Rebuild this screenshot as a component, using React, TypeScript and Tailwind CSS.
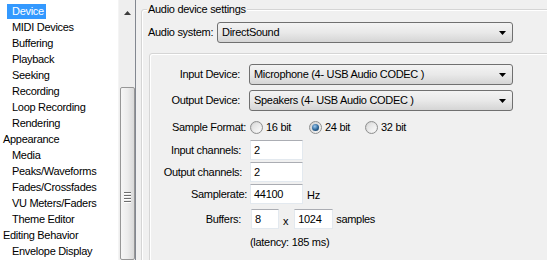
import React from 'react';

const treeItems: { label: string; child?: boolean; selected?: boolean }[] = [
  { label: 'Device', child: true, selected: true },
  { label: 'MIDI Devices', child: true },
  { label: 'Buffering', child: true },
  { label: 'Playback', child: true },
  { label: 'Seeking', child: true },
  { label: 'Recording', child: true },
  { label: 'Loop Recording', child: true },
  { label: 'Rendering', child: true },
  { label: 'Appearance' },
  { label: 'Media', child: true },
  { label: 'Peaks/Waveforms', child: true },
  { label: 'Fades/Crossfades', child: true },
  { label: 'VU Meters/Faders', child: true },
  { label: 'Theme Editor', child: true },
  { label: 'Editing Behavior' },
  { label: 'Envelope Display', child: true },
];

function Combo({ value, className }: { value: string; className: string }) {
  return (
    <div
      className={`h-[21px] flex items-center justify-between rounded-[3px] border border-[#707070] bg-linear-to-b from-[#f3f3f3] via-[#e9e9e9] to-[#d5d5d5] pl-[4px] pr-[6px] ${className}`}
    >
      <span className="whitespace-nowrap">{value}</span>
      <svg width="7" height="4" viewBox="0 0 7 4">
        <path d="M0 0h7L3.5 4z" fill="#000" />
      </svg>
    </div>
  );
}

function TextBox({ value, className }: { value: string; className: string }) {
  return (
    <div
      className={`h-[20px] flex items-center bg-white border border-[#e3e9ef] border-t-[#abadb3] pl-[3px] ${className}`}
    >
      {value}
    </div>
  );
}

function Radio({ checked, label }: { checked?: boolean; label: string }) {
  return (
    <div className="flex items-center gap-[3px]">
      <span className="w-[13px] h-[13px] rounded-full border border-[#8e8f8f] bg-linear-to-br from-[#cfcfcf] to-[#f7f7f7] flex items-center justify-center">
        {checked ? (
          <span className="w-[7px] h-[7px] rounded-full bg-[radial-gradient(circle_at_40%_35%,#9cc8ef,#2a6497_55%,#0f2a44)]" />
        ) : (
          <span className="w-[9px] h-[9px] rounded-full bg-linear-to-br from-[#dcdcdc] to-[#fbfbfb]" />
        )}
      </span>
      <span>{label}</span>
    </div>
  );
}

function Label({ text, pr }: { text: string; pr: string }) {
  return <div className={`w-[99px] shrink-0 text-right whitespace-nowrap ${pr}`}>{text}</div>;
}

export default function App() {
  return (
    <div className="w-[547px] h-[260px] overflow-hidden bg-[#f0f0f0] flex font-['Liberation_Sans',Arial,sans-serif] text-[11px] tracking-[-0.3px] text-black leading-[13px]">
      {/* tree view */}
      <div className="w-[136px] h-full shrink-0 bg-white border-r border-[#828790] flex">
        <ul className="flex-1 pt-[3px]">
          {treeItems.map((it) => (
            <li key={it.label} className="h-[16px] flex items-center">
              <span
                className={
                  (it.child ? 'ml-[7px] pl-[5px] pr-[2px]' : 'ml-[1px] pl-[2px]') +
                  (it.selected ? ' h-[15px] flex items-center bg-[#3399ff] text-white' : '') +
                  ' whitespace-nowrap'
                }
              >
                {it.label}
              </span>
            </li>
          ))}
        </ul>
        {/* scrollbar */}
        <div className="w-[17px] h-full bg-[#eeeeee] border-l border-[#f4f4f4] flex flex-col items-center">
          <div className="h-[17px] w-full flex items-center justify-center mt-[4px]">
            <svg width="7" height="4" viewBox="0 0 7 4">
              <path d="M3.5 0L7 4H0z" fill="#3c3c3c" />
            </svg>
          </div>
          <div className="mt-[66px] w-[15px] flex-1 rounded-[2px] border border-[#979797] bg-linear-to-r from-[#f6f6f6] via-[#ececec] to-[#d9d9d9] flex flex-col items-center">
            <div className="mt-[104px] flex flex-col gap-[1px]">
              <span className="w-[7px] h-[2px] border-t border-[#6e6e6e] bg-white" />
              <span className="w-[7px] h-[2px] border-t border-[#6e6e6e] bg-white" />
              <span className="w-[7px] h-[2px] border-t border-[#6e6e6e] bg-white" />
              <span className="w-[7px] h-[2px] border-t border-[#6e6e6e] bg-white" />
            </div>
          </div>
        </div>
      </div>

      {/* settings */}
      <div className="flex-1 pl-[5px] pt-[9px]">
        <div className="relative w-[440px] h-[300px] rounded-[3px] border border-[#d5d5d5] shadow-[inset_1px_1px_0_#ffffff] pl-[6px] pt-[12px]">
          <span className="absolute left-[5px] top-[-7px] bg-[#f0f0f0] px-[1px]">Audio device settings</span>

          <div className="flex items-center">
            <span className="w-[69px] shrink-0">Audio system:</span>
            <Combo value="DirectSound" className="w-[296px]" />
          </div>

          <div className="mt-[10px] ml-[1px] h-[260px] rounded-[3px] border border-[#d5d5d5] shadow-[inset_1px_1px_0_#ffffff] flex flex-col">
            <div className="mt-[10px] flex items-center">
              <Label text="Input Device:" pr="pr-[9px]" />
              <Combo value="Microphone (4- USB Audio CODEC )" className="w-[264px]" />
            </div>
            <div className="mt-[5px] flex items-center">
              <Label text="Output Device:" pr="pr-[9px]" />
              <Combo value="Speakers (4- USB Audio CODEC )" className="w-[264px]" />
            </div>
            <div className="mt-[8px] h-[16px] flex items-center">
              <Label text="Sample Format:" pr="pr-[3px]" />
              <div className="ml-[1px] w-[59px]">
                <Radio label="16 bit" />
              </div>
              <div className="w-[56px]">
                <Radio checked label="24 bit" />
              </div>
              <Radio label="32 bit" />
            </div>
            <div className="mt-[5px] flex items-center">
              <Label text="Input channels:" pr="pr-[8px]" />
              <TextBox value="2" className="ml-[1px] w-[53px]" />
            </div>
            <div className="mt-[2px] flex items-center">
              <Label text="Output channels:" pr="pr-[7px]" />
              <TextBox value="2" className="ml-[1px] w-[53px]" />
            </div>
            <div className="mt-[2px] flex items-center">
              <Label text="Samplerate:" pr="pr-[2px]" />
              <TextBox value="44100" className="ml-[1px] w-[53px]" />
              <span className="ml-[4px] mt-[2px]">Hz</span>
            </div>
            <div className="mt-[5px] flex items-center">
              <Label text="Buffers:" pr="pr-[8px]" />
              <TextBox value="8" className="ml-[2px] w-[28px]" />
              <span className="ml-[4px] mt-[5px]">x</span>
              <TextBox value="1024" className="ml-[6px] w-[39px]" />
              <span className="ml-[3px]">samples</span>
            </div>
            <div className="mt-[7px] flex items-center">
              <div className="w-[100px] shrink-0" />
              <span>(latency: 185 ms)</span>
            </div>
          </div>
        </div>
      </div>
    </div>
  );
}
